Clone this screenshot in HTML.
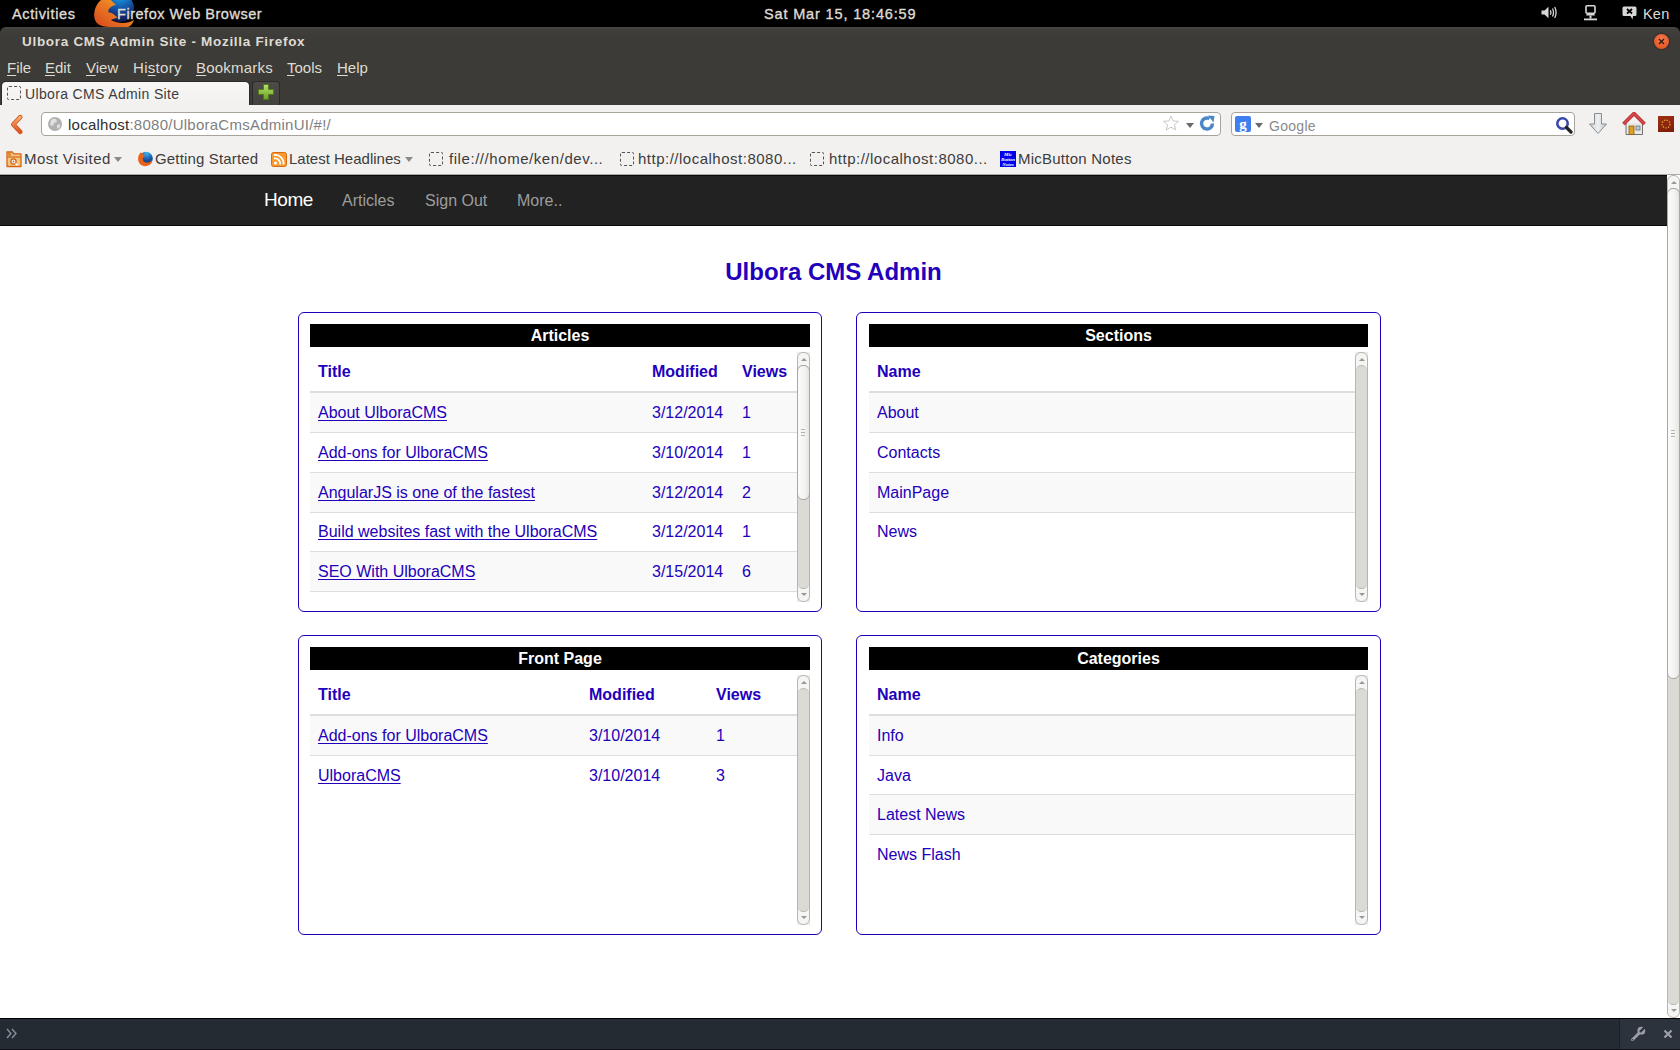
<!DOCTYPE html>
<html><head><meta charset="utf-8">
<style>
*{box-sizing:border-box;margin:0;padding:0}
html,body{width:1680px;height:1050px;overflow:hidden;background:#fff;font-family:"Liberation Sans",sans-serif;position:relative}
.a{position:absolute}
.t{position:absolute;white-space:nowrap;line-height:1}
.ul{text-decoration:underline;text-underline-offset:2px;text-decoration-skip-ink:none}
#top{left:0;top:0;width:1680px;height:34px;background:#000}
#top .t{color:#dfdbd2;font-weight:bold;font-size:14px}
#win{left:0;top:27px;width:1680px;height:78px;background:linear-gradient(#4a4945 0,#403f3b 2px,#3c3b37 12px,#3c3b37 100%);border-radius:6px 6px 0 0}
#win .m{color:#dfdbd2;font-size:15px}
#tb{left:0;top:105px;width:1680px;height:70px;background:#f2f1f0;border-bottom:1px solid #aeaba5}
#tb .bm{color:#3c3c3c;font-size:15px}
.box{position:absolute;background:#fff;border:1px solid #a8a49c;border-radius:4px}
#nav{left:0;top:175px;width:1667px;height:51px;background:#222;border-top:1px solid #080808;border-bottom:1px solid #080808}
#nav .t{font-size:16px;color:#9d9d9d}
h1.ti{position:absolute;left:0;width:1667px;text-align:center;top:259px;font-size:24px;line-height:26px;font-weight:bold;color:#2200bb}
.pn{position:absolute;width:524px;height:300px;border:1px solid #2200bb;border-radius:6px;background:#fff}
.ph{position:absolute;left:11px;top:11px;width:500px;height:23px;background:#000;color:#fff;font-weight:bold;font-size:16px;line-height:23px;text-align:center}
.sc{position:absolute;left:11px;top:39px;width:500px;height:250px;overflow:hidden}
table.tb{border-collapse:collapse;border-spacing:0;width:487px;font-size:16px;line-height:1.428571;color:#2200bb;table-layout:fixed}
table.tb th{text-align:left;padding:8px;border-bottom:2px solid #ddd;font-weight:bold;vertical-align:bottom}
table.tb td{padding:8px;border-top:1px solid #ddd;vertical-align:top;white-space:nowrap}
table.tb th span,table.tb td span{position:relative;top:1px}
table.tb tbody tr:nth-child(odd) td{background:#f9f9f9}
table.t5 tbody tr:nth-child(3) td{height:40.5px}
table.t5 tbody tr:nth-child(4) td{height:38.3px;padding-top:7px;padding-bottom:8px}
table.t6 tbody tr:nth-child(2) td{height:38.3px;padding-top:8px;padding-bottom:7px}
table.t6 tbody tr:nth-child(3) td{height:40.5px}
table.tb a{color:#2200bb;text-decoration:underline;text-underline-offset:2px;text-decoration-skip-ink:none}
.sbg{position:absolute;right:0;top:0;width:13px;height:250px;background:#ebebea}
.sb{position:absolute;right:0;top:0;width:13px;height:250px;background:#f5f5f4;border:1px solid #b9b5ae;border-radius:6px}
.sb .tr{position:absolute;left:0;right:0;top:12px;bottom:12px;background:#dcdad5;border-top:1px solid #b9b5ae;border-bottom:1px solid #b9b5ae;border-radius:6px}
.sb .th{position:absolute;left:-1px;right:-1px;background:linear-gradient(90deg,#fbfbfb,#f3f3f2 60%,#e6e5e2);border:1px solid #aaa6a0;border-radius:6px}
.sb .up,.sb .dn{position:absolute;left:3px;width:0;height:0;border-left:3px solid transparent;border-right:3px solid transparent}
.sb .up{top:5px;border-bottom:3px solid #9a9894}
.sb .dn{bottom:5px;border-top:3px solid #9a9894}
#dev{left:0;top:1018px;width:1680px;height:32px;background:#252b33;border-top:1px solid #000;border-bottom:1px solid #10141a}
</style></head><body>
<!-- GNOME top bar -->
<div id="top" class="a">
  
<svg class="a" style="left:88px;top:0" width="50" height="27" viewBox="88 0 50 27"><defs><radialGradient id="fxg" cx="0.5" cy="0" r="1"><stop offset="0" stop-color="#18b0ea"/><stop offset="0.35" stop-color="#1670c0"/><stop offset="0.7" stop-color="#143a88"/><stop offset="1" stop-color="#0c1a48"/></radialGradient><linearGradient id="fxo" x1="1" y1="0" x2="0" y2="1"><stop offset="0" stop-color="#f6b41e"/><stop offset="0.45" stop-color="#ea7a24"/><stop offset="1" stop-color="#d6461c"/></linearGradient></defs>
<circle cx="120" cy="8" r="14" fill="url(#fxg)"/>
<path d="M101 0 C95 5 92 15 96 22 C99 26 104 27 112 27 L128 27 C131 26 133 23 134 20 C128 24 118 24 111 20 C113 19 115 18.5 117.5 17.5 C114 14 111 12 108.5 12.5 C108 10 109 8 111 7 C113 5.5 115 5 116 5 C114 3 112 1.5 111 0 Z" fill="url(#fxo)"/>
</svg>
<svg class="a" style="left:1541px;top:6px" width="16" height="13" viewBox="0 0 16 13"><path d="M0.5 4.5 H3.5 L7.5 0.8 V12.2 L3.5 8.5 H0.5 Z" fill="#d8d8d8"/><path d="M9.3 4.2 Q10.5 6.5 9.3 8.8 M11.5 2.5 Q13.5 6.5 11.5 10.5 M13.7 1 Q16.5 6.5 13.7 12" fill="none" stroke="#d8d8d8" stroke-width="1.3"/></svg>
<svg class="a" style="left:1584px;top:5px" width="13" height="16" viewBox="0 0 13 16"><rect x="2" y="0.8" width="9" height="7.5" rx="1" fill="none" stroke="#d8d8d8" stroke-width="1.6"/><path d="M3 8.5 H10 L11 10.5 H2 Z" fill="#d8d8d8"/><rect x="5.5" y="10.5" width="2" height="3" fill="#d8d8d8"/><rect x="0" y="13.5" width="13" height="1.8" fill="#d8d8d8"/></svg>
<svg class="a" style="left:1622px;top:6px" width="15" height="14" viewBox="0 0 15 14"><path d="M2 0.5 H13 Q14.5 0.5 14.5 2 V8.5 Q14.5 10 13 10 H11 L10.5 13.5 L8.5 10 H2 Q0.5 10 0.5 8.5 V2 Q0.5 0.5 2 0.5 Z" fill="#d8d8d8"/><path d="M5 3 L10 7.5 M10 3 L5 7.5" stroke="#000" stroke-width="1.8"/></svg>
  <div class="t" style="left:12px;top:7px;font-weight:normal;font-size:14.5px;letter-spacing:0.64px;-webkit-text-stroke:0.35px #dfdbd2">Activities</div>
  <div class="t" style="left:117px;top:7px;font-weight:normal;font-size:14.5px;letter-spacing:0.53px;-webkit-text-stroke:0.35px #dfdbd2">Firefox Web Browser</div>
  <div class="t" style="left:764px;top:7px;font-weight:normal;font-size:14.5px;letter-spacing:0.85px;-webkit-text-stroke:0.35px #dfdbd2">Sat Mar 15, 18:46:59</div>
  <div class="t" style="left:1643px;top:7px;font-weight:normal;font-size:14.5px;letter-spacing:0.2px">Ken</div>
</div>

<!-- window title bar + menu + tabs -->
<div id="win" class="a">
  <div class="t" style="left:22px;top:8px;color:#dfdbd2;font-weight:bold;font-size:13.5px;letter-spacing:0.7px">Ulbora CMS Admin Site - Mozilla Firefox</div>
  <div class="t m" style="left:7px;top:33px"><span class="ul">F</span>ile</div>
  <div class="t m" style="left:45px;top:33px"><span class="ul">E</span>dit</div>
  <div class="t m" style="left:86px;top:33px"><span class="ul">V</span>iew</div>
  <div class="t m" style="left:133px;top:33px;letter-spacing:0.3px">Hi<span class="ul">s</span>tory</div>
  <div class="t m" style="left:196px;top:33px;letter-spacing:0.2px"><span class="ul">B</span>ookmarks</div>
  <div class="t m" style="left:287px;top:33px"><span class="ul">T</span>ools</div>
  <div class="t m" style="left:337px;top:33px"><span class="ul">H</span>elp</div>
  
  <div class="a" style="left:1654px;top:7px;width:15px;height:15px;border-radius:50%;background:radial-gradient(circle at 50% 35%,#f47a50,#df4a18);box-shadow:0 0 1px 1px #2e2d2a"></div>
  <svg class="a" style="left:1656px;top:9px" width="11" height="11" viewBox="0 0 11 11"><path d="M3 3 L8 8 M8 3 L3 8" stroke="#2a1a10" stroke-width="1.3"/></svg>
  <div class="a" style="left:1px;top:54px;width:249px;height:24px;background:linear-gradient(#f8f7f6,#f2f1f0);border:1px solid #2a2a28;border-bottom:none;border-radius:5px 5px 0 0"></div>
  <div class="a" style="left:7px;top:59px;width:14px;height:14px;border:1px dashed #555;border-radius:2px"></div>
  <div class="t" style="left:25px;top:60px;color:#3c3c3c;font-size:14px;letter-spacing:0.35px">Ulbora CMS Admin Site</div>
  <div class="a" style="left:252px;top:54px;width:28px;height:24px;background:linear-gradient(#4c4b47,#42413d);border:1px solid #2a2a28;border-bottom:none;border-radius:4px 4px 0 0"></div>
  <svg class="a" style="left:258px;top:57px" width="16" height="16" viewBox="0 0 16 16"><defs><linearGradient id="pl" x1="0" y1="0" x2="0" y2="1"><stop offset="0" stop-color="#b8e070"/><stop offset="1" stop-color="#6aa020"/></linearGradient></defs><path d="M5.5 0.5 H10.5 V5.5 H15.5 V10.5 H10.5 V15.5 H5.5 V10.5 H0.5 V5.5 H5.5 Z" fill="url(#pl)" stroke="#4a7a10" stroke-width="0.8"/></svg>

</div>
<div id="tb" class="a">
  
  <svg class="a" style="left:8px;top:7px" width="18" height="24" viewBox="0 0 18 24"><defs><linearGradient id="bk" x1="0" y1="0" x2="0" y2="1"><stop offset="0" stop-color="#f2b070"/><stop offset="1" stop-color="#e0501a"/></linearGradient></defs><path d="M12.3 5.2 L5.2 12.5 L12.3 19.8" fill="none" stroke="#d85a20" stroke-width="4.6" stroke-linecap="round" stroke-linejoin="round"/><path d="M12.3 5.2 L5.2 12.5 L12.3 19.8" fill="none" stroke="url(#bk)" stroke-width="2.8" stroke-linecap="round" stroke-linejoin="round"/></svg>
  <div class="box" style="left:41px;top:7px;width:1180px;height:24px"></div>
  <svg class="a" style="left:47px;top:11px" width="16" height="16" viewBox="0 0 16 16"><circle cx="8" cy="8" r="7" fill="#b0b0b0"/><path d="M4 4 Q6 2 9 3 L10 6 L7 7 L6 10 L3 9 Z M10 9 L13 8 L13 11 L10 13 Z" fill="#e0e0e0"/></svg>
  <div class="t" style="left:68px;top:12px;font-size:15px;letter-spacing:0.25px;color:#2e2e2e">localhost<span style="color:#7f7f7f">:8080/UlboraCmsAdminUI/#!/</span></div>
  <svg class="a" style="left:1162px;top:10px" width="18" height="17" viewBox="0 0 18 17"><path d="M9 1 L11.2 6 L16.5 6.3 L12.4 9.8 L13.8 15 L9 12.2 L4.2 15 L5.6 9.8 L1.5 6.3 L6.8 6 Z" fill="#fff" stroke="#c8c8c8" stroke-width="1" stroke-linejoin="round"/></svg>
  <svg class="a" style="left:1186px;top:18px" width="8" height="6" viewBox="0 0 8 6"><path d="M0 0 H8 L4 5 Z" fill="#6a6a6a"/></svg>
  <svg class="a" style="left:1199px;top:10px" width="17" height="17" viewBox="0 0 17 17"><path d="M13.5 8.5 A5.5 5.5 0 1 1 10.5 3.6" fill="none" stroke="#4a86c8" stroke-width="3.4"/><path d="M9 0.5 L15.5 1 L14.5 7.5 Z" fill="#4a86c8"/></svg>
  <div class="box" style="left:1231px;top:7px;width:344px;height:24px"></div>
  <div class="a" style="left:1235px;top:11px;width:16px;height:16px;background:#3f7ef0;border-radius:2px;color:#fff;font:bold 15px/16px 'Liberation Serif',serif;text-align:center">g</div>
  <svg class="a" style="left:1255px;top:18px" width="8" height="6" viewBox="0 0 8 6"><path d="M0 0 H8 L4 5 Z" fill="#6a6a6a"/></svg>
  <div class="t" style="left:1269px;top:14px;font-size:14px;letter-spacing:0.3px;color:#8a8a8a">Google</div>
  <svg class="a" style="left:1555px;top:11px" width="18" height="18" viewBox="0 0 18 18"><circle cx="7.5" cy="7.5" r="5.2" fill="#fff" stroke="#3848a8" stroke-width="2.6"/><path d="M11.5 11.5 L16 16" stroke="#222" stroke-width="3.2" stroke-linecap="round"/></svg>
  <svg class="a" style="left:1589px;top:8px" width="18" height="22" viewBox="0 0 18 22"><defs><linearGradient id="dl" x1="0" y1="0" x2="1" y2="0"><stop offset="0" stop-color="#c8ced2"/><stop offset="0.5" stop-color="#eef0f1"/><stop offset="1" stop-color="#c0c6ca"/></linearGradient></defs><path d="M5.5 0.5 H12.5 V11 H17.5 L9 20.5 L0.5 11 H5.5 Z" fill="url(#dl)" stroke="#8a8e90" stroke-width="1"/></svg>
  <svg class="a" style="left:1622px;top:7px" width="24" height="24" viewBox="0 0 24 24"><path d="M4 11 V22.5 H20.5 V11" fill="#e8e8e8" stroke="#707070" stroke-width="1"/><path d="M1.5 12 L12 1.5 L22.5 12" fill="none" stroke="#b02828" stroke-width="3.6" stroke-linejoin="round"/><path d="M1.5 12 L12 1.5 L22.5 12" fill="none" stroke="#d84848" stroke-width="2"/><rect x="7" y="14" width="5" height="8.5" fill="#e0a020" stroke="#8a6010" stroke-width="0.8"/><rect x="14" y="14" width="4" height="4" fill="#b8d0e0" stroke="#707070" stroke-width="0.8"/></svg>
  <div class="a" style="left:1658px;top:11px;width:16px;height:16px;background:linear-gradient(160deg,#a03010,#7a1c08);"><svg width="16" height="16" viewBox="0 0 16 16"><circle cx="8" cy="8" r="4" fill="none" stroke="#e0a030" stroke-width="1.2" stroke-dasharray="1.5 1.2"/></svg></div>
  <!-- bookmarks -->
  <svg class="a" style="left:5.5px;top:46px" width="16" height="17" viewBox="0 0 16 17"><path d="M1 1 H6.5 L7.5 2.8 H15 V15.5 H1 Z" fill="#f2c88a" stroke="#d8640e" stroke-width="1.3" stroke-linejoin="round"/><path d="M1.5 6 H14.5" stroke="#d8640e" stroke-width="1.2"/><rect x="2" y="2" width="3" height="3" fill="#d89040"/><circle cx="7.5" cy="10.5" r="2.6" fill="#fff" stroke="#d8640e" stroke-width="1.3"/><circle cx="7.5" cy="10.5" r="0.9" fill="#d8640e"/><path d="M9.5 12.5 L11.5 14.5" stroke="#fff" stroke-width="1.4"/></svg>
  <div class="t bm" style="left:24px;top:46px;letter-spacing:0.44px">Most Visited</div>
  <svg class="a" style="left:114px;top:52px" width="8" height="6" viewBox="0 0 8 6"><path d="M0 0 H8 L4 5 Z" fill="#8a8a8a"/></svg>
  <svg class="a" style="left:137px;top:46px" width="16" height="16" viewBox="0 0 16 16"><defs><radialGradient id="bfg" cx="0.55" cy="0.1" r="0.9"><stop offset="0" stop-color="#40b8f0"/><stop offset="0.5" stop-color="#1a5cb0"/><stop offset="1" stop-color="#10205a"/></radialGradient></defs><circle cx="9" cy="7.5" r="6.8" fill="url(#bfg)"/><path d="M3.5 1.5 C0.5 5 0.3 10 3 13 C5.5 15.7 10.5 16 13.5 13 C14.8 11.5 15.2 10 15 9 C13 12 8.5 12.5 6.5 10 C5 8 6 5.5 8 5.5 C7 4 5.5 3.5 5.5 2 C5 2 4 2 3.5 1.5 Z" fill="#e8621a"/></svg>
  <div class="t bm" style="left:155px;top:46px;letter-spacing:0.16px">Getting Started</div>
  <svg class="a" style="left:271px;top:47px" width="16" height="15" viewBox="0 0 16 15"><rect x="0.5" y="0.5" width="15" height="14" rx="2" fill="#f89a30" stroke="#d86a10"/><circle cx="4.5" cy="11" r="1.6" fill="#fff"/><path d="M3 6.5 A5 5 0 0 1 9 12.5 M3 3 A8.5 8.5 0 0 1 12.5 12.5" fill="none" stroke="#fff" stroke-width="1.8"/></svg>
  <div class="t bm" style="left:289px;top:46px">Latest Headlines</div>
  <svg class="a" style="left:405px;top:52px" width="8" height="6" viewBox="0 0 8 6"><path d="M0 0 H8 L4 5 Z" fill="#8a8a8a"/></svg>
  <div class="a" style="left:429px;top:47px;width:14px;height:14px;border:1px dashed #555;border-radius:2px"></div>
  <div class="t bm" style="left:449px;top:46px;letter-spacing:0.56px">file:///home/ken/dev...</div>
  <div class="a" style="left:620px;top:47px;width:14px;height:14px;border:1px dashed #555;border-radius:2px"></div>
  <div class="t bm" style="left:638px;top:46px;letter-spacing:0.5px">http://localhost:8080...</div>
  <div class="a" style="left:810px;top:47px;width:14px;height:14px;border:1px dashed #555;border-radius:2px"></div>
  <div class="t bm" style="left:829px;top:46px;letter-spacing:0.5px">http://localhost:8080...</div>
  <div class="a" style="left:1000px;top:46px;width:16px;height:16px;background:#0000ee;color:#fff;font:italic bold 5px/5px 'Liberation Serif',serif;text-align:center;padding-top:1px">Mic<br>Button<br>Notes</div>
  <div class="t bm" style="left:1018px;top:46px;letter-spacing:0.24px">MicButton Notes</div>

</div>
<div id="nav" class="a">
  <div class="t" style="left:264px;top:14px;color:#fff;font-size:19px;letter-spacing:-0.45px">Home</div>
  <div class="t" style="left:342px;top:17px">Articles</div>
  <div class="t" style="left:425px;top:17px">Sign Out</div>
  <div class="t" style="left:517px;top:17px">More..</div>
</div>

<div class="a" style="left:1667px;top:175px;width:13px;height:843px;background:#f5f5f4;border:1px solid #b9b5ae;border-radius:6px">
  <div class="a" style="left:0;right:0;top:12px;bottom:12px;background:#dcdad5;border-top:1px solid #b9b5ae;border-bottom:1px solid #b9b5ae;border-radius:6px"></div>
  <div class="a" style="left:-1px;right:-1px;top:12px;height:491px;background:linear-gradient(90deg,#fbfbfb,#f3f3f2 60%,#e6e5e2);border:1px solid #aaa6a0;border-radius:6px"><div class="a" style="left:3px;top:241px;width:4px;height:7px;border-top:1px solid #b8b4ae;border-bottom:1px solid #b8b4ae"><div class="a" style="left:0;top:2px;width:4px;height:1px;background:#b0aca6"></div></div></div>
  <div class="a" style="left:3px;top:5px;border-left:3px solid transparent;border-right:3px solid transparent;border-bottom:3px solid #9a9894"></div>
  <div class="a" style="left:3px;bottom:5px;border-left:3px solid transparent;border-right:3px solid transparent;border-top:3px solid #9a9894"></div>
</div>

<h1 class="ti">Ulbora CMS Admin</h1>
<div class="pn" style="left:298px;top:312px">
  <div class="ph">Articles</div>
  <div class="sc">
    <table class="tb t5"><colgroup><col style="width:334px"><col style="width:90px"><col style="width:63px"></colgroup>
    <thead><tr><th><span>Title</span></th><th><span>Modified</span></th><th><span>Views</span></th></tr></thead><tbody>
    <tr><td><span><a>About UlboraCMS</a></span></td><td><span>3/12/2014</span></td><td><span>1</span></td></tr>
    <tr><td><span><a>Add-ons for UlboraCMS</a></span></td><td><span>3/10/2014</span></td><td><span>1</span></td></tr>
    <tr><td><span><a>AngularJS is one of the fastest</a></span></td><td><span>3/12/2014</span></td><td><span>2</span></td></tr>
    <tr><td><span><a>Build websites fast with the UlboraCMS</a></span></td><td><span>3/12/2014</span></td><td><span>1</span></td></tr>
    <tr><td><span><a>SEO With UlboraCMS</a></span></td><td><span>3/15/2014</span></td><td><span>6</span></td></tr>
    <tr><td><span><a>Tips</a></span></td><td><span>3/15/2014</span></td><td><span>1</span></td></tr>
    </tbody></table>
    <div class="sbg"></div><div class="sb"><div class="tr"></div><div class="th" style="top:12px;height:135px"><div class="a" style="left:3px;top:63px;width:4px;height:7px;border-top:1px solid #b8b4ae;border-bottom:1px solid #b8b4ae"><div class="a" style="left:0;top:2px;width:4px;height:1px;background:#b0aca6"></div></div></div><div class="up"></div><div class="dn"></div></div>
  </div>
</div>
<div class="pn" style="left:856px;top:312px;width:525px">
  <div class="ph" style="left:12px;width:499px">Sections</div>
  <div class="sc" style="left:12px;width:499px">
    <table class="tb t5" style="width:486px"><thead><tr><th><span>Name</span></th></tr></thead><tbody>
    <tr><td><span>About</span></td></tr><tr><td><span>Contacts</span></td></tr><tr><td><span>MainPage</span></td></tr><tr><td><span>News</span></td></tr>
    </tbody></table>
    <div class="sbg"></div><div class="sb"><div class="tr"></div><div class="up"></div><div class="dn"></div></div>
  </div>
</div>
<div class="pn" style="left:298px;top:635px">
  <div class="ph">Front Page</div>
  <div class="sc">
    <table class="tb"><colgroup><col style="width:271px"><col style="width:127px"><col style="width:89px"></colgroup>
    <thead><tr><th><span>Title</span></th><th><span>Modified</span></th><th><span>Views</span></th></tr></thead><tbody>
    <tr><td><span><a>Add-ons for UlboraCMS</a></span></td><td><span>3/10/2014</span></td><td><span>1</span></td></tr>
    <tr><td><span><a>UlboraCMS</a></span></td><td><span>3/10/2014</span></td><td><span>3</span></td></tr>
    </tbody></table>
    <div class="sbg"></div><div class="sb"><div class="tr"></div><div class="up"></div><div class="dn"></div></div>
  </div>
</div>
<div class="pn" style="left:856px;top:635px;width:525px">
  <div class="ph" style="left:12px;width:499px">Categories</div>
  <div class="sc" style="left:12px;width:499px">
    <table class="tb t6" style="width:486px"><thead><tr><th><span>Name</span></th></tr></thead><tbody>
    <tr><td><span>Info</span></td></tr><tr><td><span>Java</span></td></tr><tr><td><span>Latest News</span></td></tr><tr><td><span>News Flash</span></td></tr>
    </tbody></table>
    <div class="sbg"></div><div class="sb"><div class="tr"></div><div class="up"></div><div class="dn"></div></div>
  </div>
</div>
<div id="dev" class="a">
  
  <svg class="a" style="left:6px;top:9px" width="12" height="11" viewBox="0 0 12 11"><path d="M1 1 L5 5.5 L1 10 M6 1 L10 5.5 L6 10" fill="none" stroke="#8a9098" stroke-width="1.4"/></svg>
  <div class="a" style="left:1619px;top:0;width:61px;height:30px;background:#2c333c;border-left:1px solid #1a1f25"></div>
  <svg class="a" style="left:1630px;top:7px" width="16" height="16" viewBox="0 0 16 16"><path d="M10 6.2 L2.4 13.8" stroke="#9aa0a6" stroke-width="2.8" stroke-linecap="round"/><circle cx="11.3" cy="4.7" r="3.9" fill="#9aa0a6"/><path d="M10.6 5.4 L14.6 1.4" stroke="#2c333c" stroke-width="2.2" stroke-linecap="round"/><circle cx="2.5" cy="13.7" r="0.75" fill="#2c333c"/></svg>
  <svg class="a" style="left:1663px;top:10px" width="10" height="10" viewBox="0 0 10 10"><path d="M1.5 1.5 L8.5 8.5 M8.5 1.5 L1.5 8.5" stroke="#9aa0a6" stroke-width="2.2"/></svg>

</div>
</body></html>
